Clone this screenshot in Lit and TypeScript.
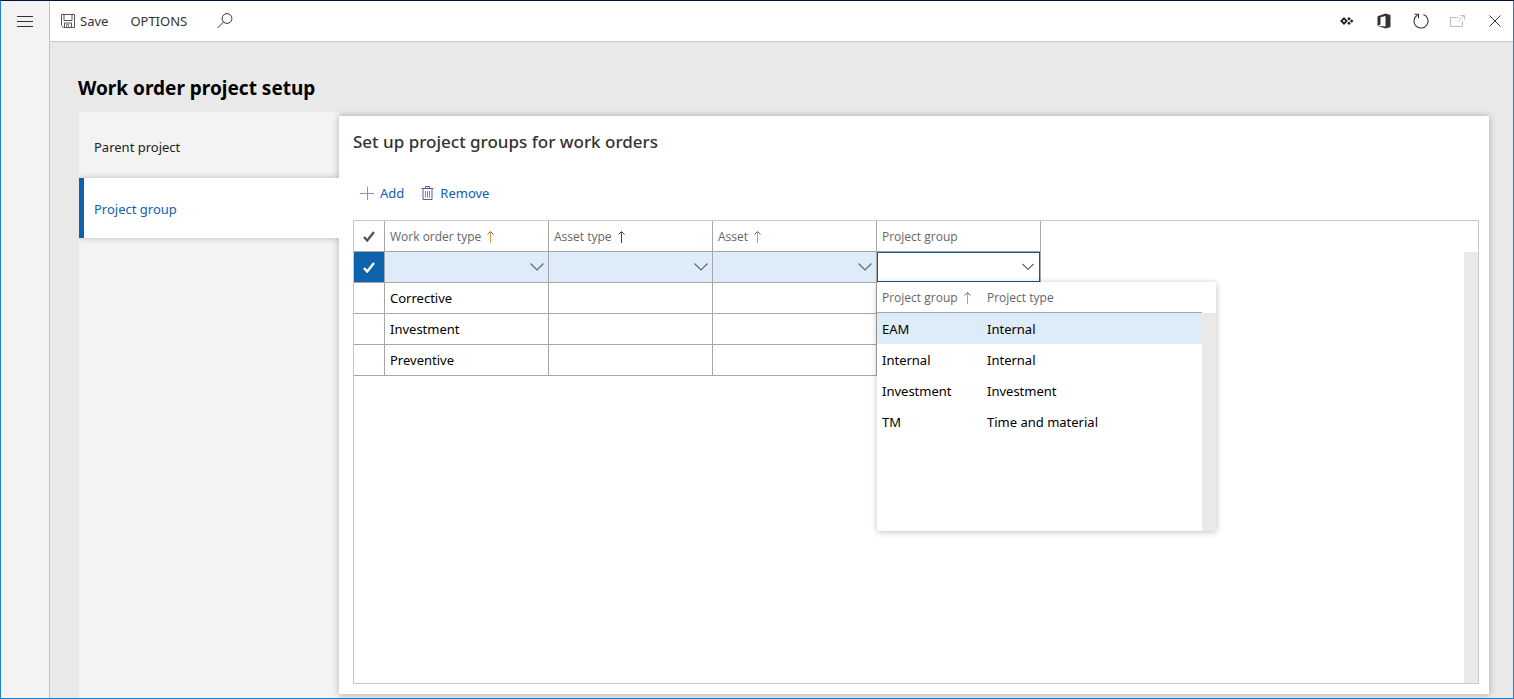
import { LitElement, html, css, svg, nothing } from "lit";
import { customElement, state } from "lit/decorators.js";

interface Column {
  title: string;
  sorted: boolean;
  tone: string;
}

const COLUMNS: Column[] = [
  { title: "Work order type", sorted: true, tone: "amber" },
  { title: "Asset type", sorted: true, tone: "dark" },
  { title: "Asset", sorted: true, tone: "amber" },
];

const ROWS = ["Corrective", "Investment", "Preventive"];

const GROUPS = [
  ["EAM", "Internal"],
  ["Internal", "Internal"],
  ["Investment", "Investment"],
  ["TM", "Time and material"],
];

const icon = (w: number, h: number, body: unknown) =>
  html`<svg class="icon" width=${w} height=${h} viewBox="0 0 ${w} ${h}" aria-hidden="true">${body}</svg>`;

const menuIcon = icon(16, 11, svg`<path d="M0 .5h16M0 5.500h16M0 10.500h16" transform="translate(0 -.5)" shape-rendering="crispEdges" stroke="#333" fill="none"/>`);
const saveIcon = icon(14, 14, svg`<path d="M.5.5h13v13H2.500l-2-2z M3 .5v6h8v-6 M3.500 13.500v-4.500h7v4.500" stroke="#555" fill="none"/><path d="M5.500 13v-2.500h2V13" stroke="#5a86b0" fill="none"/>`);
const searchIcon = icon(16, 16, svg`<circle cx="10" cy="5.500" r="4.900" stroke="#333" fill="none"/><path d="M6.500 9 .5 15" stroke="#333" fill="none"/>`);
const diamondIcon = icon(14, 8, svg`<path d="M4 1.300 6.700 4 4 6.700 1.300 4z" stroke="#222" stroke-width="1.800" fill="none"/><path d="M9 0 10.800 1.800 9 3.600 7.200 1.800z M9 4.400 10.800 6.200 9 8 7.200 6.200z M11.700 2.200 13.500 4 11.700 5.800 9.900 4z" fill="#222"/>`);
const officeIcon = icon(14, 16, svg`<path d="M.5 3.200 8.500.500 13.500 2v12l-5 1.500-8-2.800 8 .8V3L3.500 4.200v7.300l-3 1.200z" fill="#333"/>`);
const refreshIcon = icon(16, 16, svg`<path d="M10.500 1.500A7 7 0 1 1 4.500 2" stroke="#333" stroke-width="1.100" fill="none"/><path d="M1.500 1.300h4v4" stroke="#333" stroke-width="1.100" fill="none"/>`);
const popoutIcon = icon(15, 12, svg`<path d="M8.500 2.500h-8v9h12V6 M8 6.500 13.500 1 M10.500.500h4v4" stroke="#bbb" fill="none"/>`);
const closeIcon = icon(12, 12, svg`<path d="m.5.5 11 11m0-11-11 11" stroke="#333" fill="none"/>`);
const plusIcon = icon(14, 14, svg`<path d="M0 7.500h14M7.500.500v13.500" stroke="#8a93b8" fill="none"/>`);
const trashIcon = icon(13, 14, svg`<path d="M.5 2.500h12M4.500 2V.500h4V2M2 2.500v11h9v-11" stroke="#4a62a0" fill="none"/><path d="M4.500 5v6.500M6.500 5v6.500M8.500 5v6.500" stroke="#8088a8" fill="none"/>`);
const chevronIcon = icon(14, 8, svg`<path d="m.5.5 6.500 6.500L13.500.5" stroke="#666" stroke-width="1.200" fill="none"/>`);
const smallChevronIcon = icon(12, 8, svg`<path d="m.5 1 5.500 5.500L11.500 1" stroke="#666" stroke-width="1.200" fill="none"/>`);
const checkIcon = icon(12, 11, svg`<path d="m1 6 3.200 3.500L11 1" stroke="currentColor" stroke-width="2.400" fill="none"/>`);
const sortIcon = (tone: string) =>
  icon(7, 12, svg`<path d="M3.500 1v11" shape-rendering="crispEdges" stroke=${tone === "amber" ? "#d89a48" : "#444"} fill="none"/><path d="M.5 3.500l3-3 3 3" stroke=${tone === "amber" ? "#8a6238" : "#444"} fill="none"/>`);

@customElement("app-root")
export class AppRoot extends LitElement {
  @state() private highlighted = 0;

  static styles = css`
    :host {
      display: flex;
      box-sizing: border-box;
      min-height: 100vh;
      border: 1px solid #1b80cf;
      border-top-color: #00143a;
      background: #e9e9e9;
      color: #000;
      font: 13px/20px "Noto Sans", "Open Sans", sans-serif;
    }
    * { box-sizing: border-box; }
    .icon { display: block; flex: none; }
    button, input { font: inherit; color: inherit; margin: 0; }
    button {
      display: flex;
      align-items: center;
      justify-content: center;
      padding: 0;
      border: 0;
      background: none;
    }
    .rail {
      flex: none;
      width: 49px;
      border-right: 1px solid #c3c3c3;
      background: #f3f3f3;
    }
    .rail button { width: 48px; height: 40px; }
    .main { flex: 1; min-width: 0; display: flex; flex-direction: column; }
    .bar {
      display: flex;
      align-items: center;
      justify-content: space-between;
      height: 41px;
      padding: 0 8px 0 11px;
      border-bottom: 1px solid #c8c8c8;
      background: #fff;
      color: #333;
    }
    .commands, .tools { display: flex; align-items: center; }
    .commands { gap: 22px; }
    .commands button { gap: 5px; height: 32px; }
    .commands .search { margin-left: 8px; }
    .tools { gap: 16px; }
    .tools button { width: 21px; height: 32px; }
    .body { flex: 1; display: flex; flex-direction: column; padding: 32px 24px 0 28px; }
    h1 { margin: 0 0 10px; font-size: 19px; line-height: 28px; font-weight: 700; }
    .page { flex: 1; display: flex; margin-left: 1px; }
    .tabs {
      flex: none;
      display: flex;
      flex-direction: column;
      gap: 2px;
      width: 260px;
      padding-top: 4px;
      background: #f3f3f3;
    }
    .tab {
      display: flex;
      align-items: center;
      height: 60px;
      padding: 2px 0 0 10px;
      border-left: 5px solid transparent;
      color: #222;
      text-decoration: none;
    }
    .tab.active {
      position: relative;
      z-index: 1;
      border-left-color: #0f62ac;
      background: #fff;
      color: #1160b0;
      box-shadow: 0 0 6px rgba(0, 0, 0, 0.25);
      clip-path: inset(-8px 0 -8px 0);
    }
    .panel {
      flex: 1;
      min-width: 0;
      display: flex;
      flex-direction: column;
      margin: 4px 0;
      padding: 12px 10px 10px 14px;
      background: #fff;
      box-shadow: 0 0 7px rgba(0, 0, 0, 0.28);
    }
    h2 { margin: 0 0 21px; font-size: 17px; line-height: 28px; font-weight: 500; color: #333; }
    .actions { display: flex; gap: 17px; margin-bottom: 11px; padding-left: 7px; color: #1160a8; }
    .actions button { gap: 6px; height: 32px; }
    .grid {
      flex: 1;
      display: flex;
      justify-content: space-between;
      border: 1px solid #c8c8c8;
    }
    .scroll { width: 14px; background: #e9e9e9; }
    .grid > .scroll { margin-top: 31px; }
    table { border-collapse: separate; border-spacing: 0; table-layout: fixed; }
    th, td { height: 31px; padding: 0; text-align: left; }
    th { font-family: "Open Sans", "Noto Sans", sans-serif; font-size: 12px; font-weight: 400; color: #666; }
    .lines { width: 687px; align-self: flex-start; }
    .lines > thead > tr > th, .lines > tbody > tr > td {
      border-right: 1px solid #a6a6a6;
      border-bottom: 1px solid #a6a6a6;
    }
    .mark { width: 31px; }
    .label { display: flex; align-items: center; gap: 6px; padding: 2px 0 0 5px; }
    td.text { padding-left: 5px; }
    .check { display: flex; align-items: center; justify-content: center; height: 30px; color: #555; }
    .check.on { background: #0f62ac; color: #fff; }
    .check input { position: absolute; opacity: 0; width: 12px; height: 12px; }
    .field { display: flex; height: 30px; background: #deebf8; }
    .field input {
      flex: 1;
      min-width: 0;
      padding: 0 5px;
      border: 0;
      outline: 0;
      background: none;
    }
    .field button { width: 22px; }
    .field.editing { border: 1px solid #0f5a9c; background: #fff; }
    .anchor { position: relative; }
    .popup {
      position: absolute;
      z-index: 2;
      top: 30px;
      left: 0;
      display: flex;
      width: 339px;
      height: 249px;
      border-radius: 2px;
      background: #fff;
      box-shadow: 0 1px 6px rgba(0, 0, 0, 0.25);
    }
    .options { flex: 1; }
    .options table { width: 100%; }
    .options th { border-bottom: 1px solid #a6a6a6; }
    .options .group { width: 105px; }
    .options td { padding-left: 5px; }
    .options .chosen { background: #deebf8; }
    .popup > .scroll { margin-top: 31px; }
  `;

  private check(label: string, on: boolean, ticked: boolean) {
    return html`<label class="check ${on ? "on" : ""}">
      <input type="checkbox" aria-label=${label} .checked=${on} />${ticked ? checkIcon : nothing}
    </label>`;
  }

  private field(label: string) {
    return html`<div class="field">
      <input type="text" aria-label=${label} />
      <button aria-label="Open ${label}">${chevronIcon}</button>
    </div>`;
  }

  private popup() {
    return html`<div class="popup">
      <div class="options">
        <table>
          <thead>
            <tr>
              <th class="group"><div class="label">Project group ${sortIcon("amber")}</div></th>
              <th><div class="label">Project type</div></th>
            </tr>
          </thead>
          <tbody>
            ${GROUPS.map(
              ([group, type], i) => html`<tr
                class=${i === this.highlighted ? "chosen" : ""}
                @mouseenter=${() => (this.highlighted = i)}
              >
                <td>${group}</td>
                <td>${type}</td>
              </tr>`
            )}
          </tbody>
        </table>
      </div>
      <div class="scroll"></div>
    </div>`;
  }

  render() {
    return html`
      <nav class="rail"><button aria-label="Menu">${menuIcon}</button></nav>
      <div class="main">
        <header class="bar">
          <div class="commands">
            <button>${saveIcon} Save</button>
            <button>OPTIONS</button>
            <button class="search" aria-label="Search">${searchIcon}</button>
          </div>
          <div class="tools">
            <button aria-label="Personalize">${diamondIcon}</button>
            <button aria-label="Open in Office">${officeIcon}</button>
            <button aria-label="Refresh">${refreshIcon}</button>
            <button aria-label="Open in new window">${popoutIcon}</button>
            <button aria-label="Close">${closeIcon}</button>
          </div>
        </header>
        <main class="body">
          <h1>Work order project setup</h1>
          <div class="page">
            <nav class="tabs">
              <a class="tab" href="#parent">Parent project</a>
              <a class="tab active" href="#group" aria-current="page">Project group</a>
            </nav>
            <section class="panel">
              <h2>Set up project groups for work orders</h2>
              <div class="actions">
                <button>${plusIcon} Add</button>
                <button>${trashIcon} Remove</button>
              </div>
              <div class="grid">
                <table class="lines">
                  <thead>
                    <tr>
                      <th class="mark">${this.check("Select all", false, true)}</th>
                      ${COLUMNS.map(
                        (c) => html`<th><div class="label">${c.title} ${c.sorted ? sortIcon(c.tone) : nothing}</div></th>`
                      )}
                      <th><div class="label">Project group</div></th>
                    </tr>
                  </thead>
                  <tbody>
                    <tr>
                      <td>${this.check("Select new line", true, true)}</td>
                      ${COLUMNS.map((c) => html`<td>${this.field(c.title)}</td>`)}
                      <td>
                        <div class="anchor">
                          <div class="field editing">
                            <input type="text" role="combobox" aria-expanded="true" aria-label="Project group" />
                            <button aria-label="Close Project group">${smallChevronIcon}</button>
                          </div>
                          ${this.popup()}
                        </div>
                      </td>
                    </tr>
                    ${ROWS.map(
                      (name) => html`<tr>
                        <td>${this.check(`Select ${name}`, false, false)}</td>
                        <td class="text">${name}</td>
                        <td></td>
                        <td></td>
                        <td></td>
                      </tr>`
                    )}
                  </tbody>
                </table>
                <div class="scroll"></div>
              </div>
            </section>
          </div>
        </main>
      </div>
    `;
  }
}
